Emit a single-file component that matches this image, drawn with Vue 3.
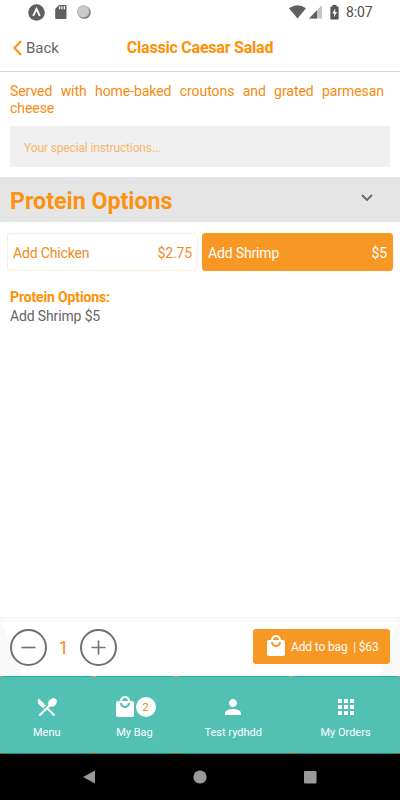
<script setup>
import { ref } from "vue";

const options = [
    { name: "Add Chicken", price: "$2.75" },
    { name: "Add Shrimp", price: "$5" }
];
const selected = ref(1);
const quantity = ref(1);
const instructions = ref("");

const bagIcon =
    "M19 6h-2c0-2.76-2.24-5-5-5S7 3.24 7 6H5c-1.1 0-1.99.9-1.99 2L3 20c0 1.1.9 2 2 2h14c1.1 0 2-.9 2-2V8c0-1.1-.9-2-2-2zm-7-3c1.66 0 3 1.34 3 3H9c0-1.66 1.34-3 3-3zm0 10c-2.76 0-5-2.24-5-5h2c0 1.66 1.34 3 3 3s3-1.34 3-3h2c0 2.76-2.24 5-5 5z";

const tabs = [
    {
        label: "Menu",
        name: "menu",
        icon: "M8.1 13.34l2.83-2.83L3.91 3.5c-1.56 1.56-1.56 4.09 0 5.66l4.19 4.18zm6.78-1.81c1.53.71 3.68.21 5.27-1.38 1.91-1.91 2.28-4.65.81-6.12-1.46-1.46-4.2-1.1-6.12.81-1.59 1.59-2.09 3.74-1.38 5.27L3.7 19.87l1.41 1.41L12 14.41l6.88 6.88 1.41-1.41L13.41 13l1.47-1.47z"
    },
    { label: "My Bag", name: "bag", icon: bagIcon, badge: 2 },
    {
        label: "Test rydhdd",
        name: "account",
        icon: "M12 12c2.21 0 4-1.79 4-4s-1.79-4-4-4-4 1.79-4 4 1.79 4 4 4zm0 2c-2.67 0-8 1.34-8 4v2h16v-2c0-2.66-5.33-4-8-4z"
    },
    {
        label: "My Orders",
        name: "orders",
        icon: "M4 8h4V4H4v4zm6 12h4v-4h-4v4zm-6 0h4v-4H4v4zm0-6h4v-4H4v4zm6 0h4v-4h-4v4zm6-10v4h4V4h-4zm-6 4h4V4h-4v4zm6 6h4v-4h-4v4zm0 6h4v-4h-4v4z"
    }
];
</script>

<template>
    <div class="screen">
        <div class="status-bar">
            <div class="status-left">
                <svg width="17" height="17" viewBox="0 0 17 17">
                    <circle cx="8.5" cy="8.5" r="8.3" fill="#606060" />
                    <path d="M5.2 11.8L8.5 5l3.3 6.8" fill="none" stroke="#fff" stroke-width="1.9" />
                </svg>
                <svg width="12" height="14" viewBox="0 0 12 14">
                    <path d="M4 0h6.5q1 0 1 1v12q0 1-1 1H1.2q-1 0-1-1V4z" fill="#606060" />
                    <path d="M4.6 1.2v3M7 1.2v3M9.4 1.2v3" stroke="#fff" stroke-width="1.2" />
                </svg>
                <svg width="14" height="14" viewBox="0 0 14 14">
                    <circle cx="7.3" cy="7.4" r="6.4" fill="#777" />
                    <circle cx="6.3" cy="6.5" r="6" fill="#cacaca" stroke="#aaa" stroke-width=".6" />
                </svg>
            </div>
            <div class="status-right">
                <svg width="17" height="14" viewBox="0 0 17 14">
                    <path d="M0 3.2Q8.5-2.6 17 3.2L8.5 13.5z" fill="#606060" />
                </svg>
                <svg width="13" height="14" viewBox="0 0 13 14">
                    <path d="M13 0v13.5H0z" fill="#c6c6c6" />
                    <path d="M8 5.2v8.3H0z" fill="#606060" />
                </svg>
                <svg class="battery" width="9" height="15" viewBox="0 0 9 15">
                    <path d="M2.5 0h4v1.4h1.2q.9 0 .9.9v11.2q0 .9-.9.9H1.3q-.9 0-.9-.9V2.3q0-.9.9-.9h1.2z" fill="#565656" />
                    <path d="M5.2 3.4L2.2 8.6h1.9v3.7l2.9-5.2H5.2z" fill="#fff" />
                </svg>
                <span class="clock">8:07</span>
            </div>
        </div>

        <header class="header">
            <button class="back">
                <svg width="9" height="16" viewBox="0 0 9 16">
                    <path d="M8 1L1.5 8 8 15" fill="none" stroke="#ff9000" stroke-width="2" />
                </svg>
                <span>Back</span>
            </button>
            <h1>Classic Caesar Salad</h1>
        </header>

        <main class="content">
            <p class="description">Served with home-baked croutons and grated parmesan cheese</p>
            <input v-model="instructions" class="instructions" placeholder="Your special instructions..." />

            <div class="section-title">
                <h2>Protein Options</h2>
                <svg width="12" height="8" viewBox="0 0 12 8">
                    <path d="M1 1l5 5 5-5" fill="none" stroke="#6a6a6a" stroke-width="1.9" />
                </svg>
            </div>

            <div class="options">
                <button
                    v-for="(option, index) in options"
                    :key="option.name"
                    class="option"
                    :class="{ active: selected === index }"
                    @click="selected = index"
                >
                    <span>{{ option.name }}</span>
                    <span>{{ option.price }}</span>
                </button>
            </div>

            <div class="summary">
                <strong>Protein Options:</strong>
                <span>{{ options[selected].name }} {{ options[selected].price }}</span>
            </div>
        </main>

        <div class="order-bar">
            <div class="stepper">
                <button class="round" @click="quantity > 1 && quantity--">
                    <svg width="15" height="15" viewBox="0 0 15 15">
                        <path d="M.5 7.5h14" stroke="#757575" stroke-width="1.7" />
                    </svg>
                </button>
                <span class="quantity">{{ quantity }}</span>
                <button class="round" @click="quantity++">
                    <svg width="15" height="15" viewBox="0 0 15 15">
                        <path d="M.5 7.5h14M7.5.5v14" stroke="#757575" stroke-width="1.7" />
                    </svg>
                </button>
            </div>
            <button class="add">
                <svg width="24" height="24" viewBox="0 0 24 24"><path :d="bagIcon" fill="#fff" /></svg>
                <span>Add to bag&nbsp; | $63</span>
            </button>
        </div>

        <nav class="tabs">
            <button v-for="tab in tabs" :key="tab.name" class="tab" :class="tab.name">
                <span class="tab-icon">
                    <svg width="24" height="24" viewBox="0 0 24 24"><path :d="tab.icon" fill="#fff" /></svg>
                    <span v-if="tab.badge" class="badge">{{ tab.badge }}</span>
                </span>
                <span class="tab-label">{{ tab.label }}</span>
            </button>
        </nav>

        <div class="system-nav">
            <svg width="12" height="14" viewBox="0 0 12 14"><path d="M12 .5v13L0 7z" fill="#999" /></svg>
            <svg width="14" height="14" viewBox="0 0 14 14"><circle cx="7" cy="7" r="6.6" fill="#999" /></svg>
            <svg width="13" height="13" viewBox="0 0 13 13"><rect width="12.5" height="12.5" rx="1" fill="#999" /></svg>
        </div>
    </div>
</template>

<style>
body {
    margin: 0;
}
</style>

<style scoped>
.screen {
    width: 400px;
    height: 800px;
    display: flex;
    flex-direction: column;
    overflow: hidden;
    background: #fff;
    font-family: Roboto, "Liberation Sans", sans-serif;
    color: #666;
}
button {
    border: 0;
    padding: 0;
    background: none;
    font: inherit;
    color: inherit;
}
svg {
    display: block;
    flex: none;
}
.status-bar {
    height: 24px;
    display: flex;
    justify-content: space-between;
    box-sizing: border-box;
    padding: 0 27px 0 28px;
}
.status-left,
.status-right {
    display: flex;
    align-items: center;
}
.status-left {
    gap: 10px;
}
.status-right {
    gap: 3px;
}
.battery {
    margin-left: 5px;
}
.clock {
    width: 27px;
    margin-left: 4px;
    font-size: 14px;
    letter-spacing: -0.1px;
    line-height: 24px;
    color: #505050;
    white-space: nowrap;
}
.header {
    height: 48px;
    box-sizing: border-box;
    display: grid;
    grid-template-columns: 100px 200px 100px;
    align-items: center;
    border-bottom: 1px solid #d9d9d9;
}
.back {
    display: flex;
    align-items: center;
    gap: 4px;
    padding: 1px 0 0 13px;
    font-size: 15px;
}
h1 {
    margin: 0;
    text-align: center;
    font-size: 16px;
    font-weight: 700;
    letter-spacing: -0.22px;
    color: #ff9000;
    white-space: nowrap;
}
.content {
    flex: 1;
}
.description {
    margin: 11px 16px 9px 10px;
    font-size: 14px;
    letter-spacing: -0.06px;
    line-height: 17px;
    text-align: justify;
    color: #f88a10;
}
.instructions {
    display: block;
    width: 380px;
    height: 41px;
    box-sizing: border-box;
    margin: 0 10px 10px;
    padding: 2px 14px 0;
    border: 0;
    border-radius: 0;
    background: #f0f0f0;
    font: 12px Roboto, "Liberation Sans", sans-serif;
    letter-spacing: -0.14px;
    color: #f7931e;
}
.instructions::placeholder {
    color: #f5b76c;
    opacity: 1;
}
.section-title {
    height: 45px;
    display: flex;
    justify-content: space-between;
    padding: 0 27px 0 10px;
    background: #e5e5e5;
}
.section-title svg {
    margin-top: 17px;
}
h2 {
    margin: 0;
    padding-top: 1px;
    font-size: 23.2px;
    line-height: 47px;
    font-weight: 700;
    color: #fa9212;
}
.options {
    display: flex;
    gap: 4px;
    padding: 11px 7px 0;
}
.option {
    flex: 1;
    height: 38px;
    box-sizing: border-box;
    display: flex;
    justify-content: space-between;
    align-items: center;
    padding: 1px 5px 0;
    border: 1px solid #fdeedb;
    border-radius: 3px;
    font-size: 14px;
    letter-spacing: -0.15px;
    color: #f28a1c;
}
.option.active {
    background: #f89824;
    border-color: #f89824;
    color: #fff;
}
.summary {
    display: flex;
    flex-direction: column;
    padding: 17px 10px 0;
    font-size: 14px;
    letter-spacing: -0.14px;
    line-height: 18px;
}
.summary strong {
    line-height: 19px;
    color: #ff9000;
}
.order-bar {
    height: 59px;
    box-sizing: border-box;
    display: flex;
    justify-content: space-between;
    align-items: center;
    padding: 0 10px 0;
    border-top: 1px solid #f5f5f5;
    background: linear-gradient(70deg, #f9f9f9 20px, transparent 21px), linear-gradient(290deg, #f9f9f9 20px, transparent 21px), linear-gradient(#fbfbfb 4px, transparent 5px);
}
.stepper {
    display: flex;
    align-items: center;
}
.round {
    width: 37px;
    height: 37px;
    box-sizing: border-box;
    border: 2px solid #707070;
    border-radius: 50%;
    display: flex;
    align-items: center;
    justify-content: center;
}
.quantity {
    width: 33px;
    padding-top: 1px;
    text-align: center;
    font-size: 18px;
    color: #f58a1a;
}
.add {
    width: 137px;
    height: 35px;
    box-sizing: border-box;
    display: flex;
    align-items: center;
    gap: 3px;
    margin-bottom: 2px;
    padding-left: 11px;
    border-radius: 3px;
    background: #f89824;
    color: #fff;
    font-size: 12px;
    letter-spacing: -0.15px;
    white-space: nowrap;
}
.add span {
    padding-top: 1px;
}
.tabs {
    height: 78px;
    display: grid;
    grid-template-columns: 93.5px 82px 115.5px 109px;
    background: #53c0b4;
}
.tab {
    display: flex;
    flex-direction: column;
    align-items: center;
    box-sizing: border-box;
    padding-top: 19px;
    font-size: 11px;
    color: #fff;
    /* orange ticks where the cells meet, over the top and bottom rules */
    background:
        linear-gradient(#e7962f, #e7962f) left top / 2px 1px no-repeat,
        linear-gradient(#e7962f, #e7962f) right top / 2px 1px no-repeat,
        linear-gradient(#e7962f, #e7962f) left bottom 1px / 2px 1px no-repeat,
        linear-gradient(#e7962f, #e7962f) right bottom 1px / 2px 1px no-repeat,
        linear-gradient(#12b5a5, #12b5a5) left top / 100% 1px no-repeat,
        linear-gradient(#2d8379, #2d8379) left bottom / 100% 1px no-repeat;
}
.tab-icon {
    display: flex;
    align-items: center;
}
.bag .tab-icon {
    position: relative;
    left: -0.5px;
}
.badge {
    width: 20px;
    height: 20px;
    margin-left: -1px;
    border-radius: 50%;
    background: #fff;
    color: #f58a1a;
    font-size: 11.5px;
    line-height: 21px;
    text-align: center;
}
.tab-label {
    margin-top: 7px;
    line-height: 14px;
}
.system-nav {
    height: 46px;
    display: flex;
    align-items: center;
    gap: 98px;
    padding-left: 83px;
    background: #000;
}
.system-nav svg:last-child {
    margin-left: -1px;
}
</style>
